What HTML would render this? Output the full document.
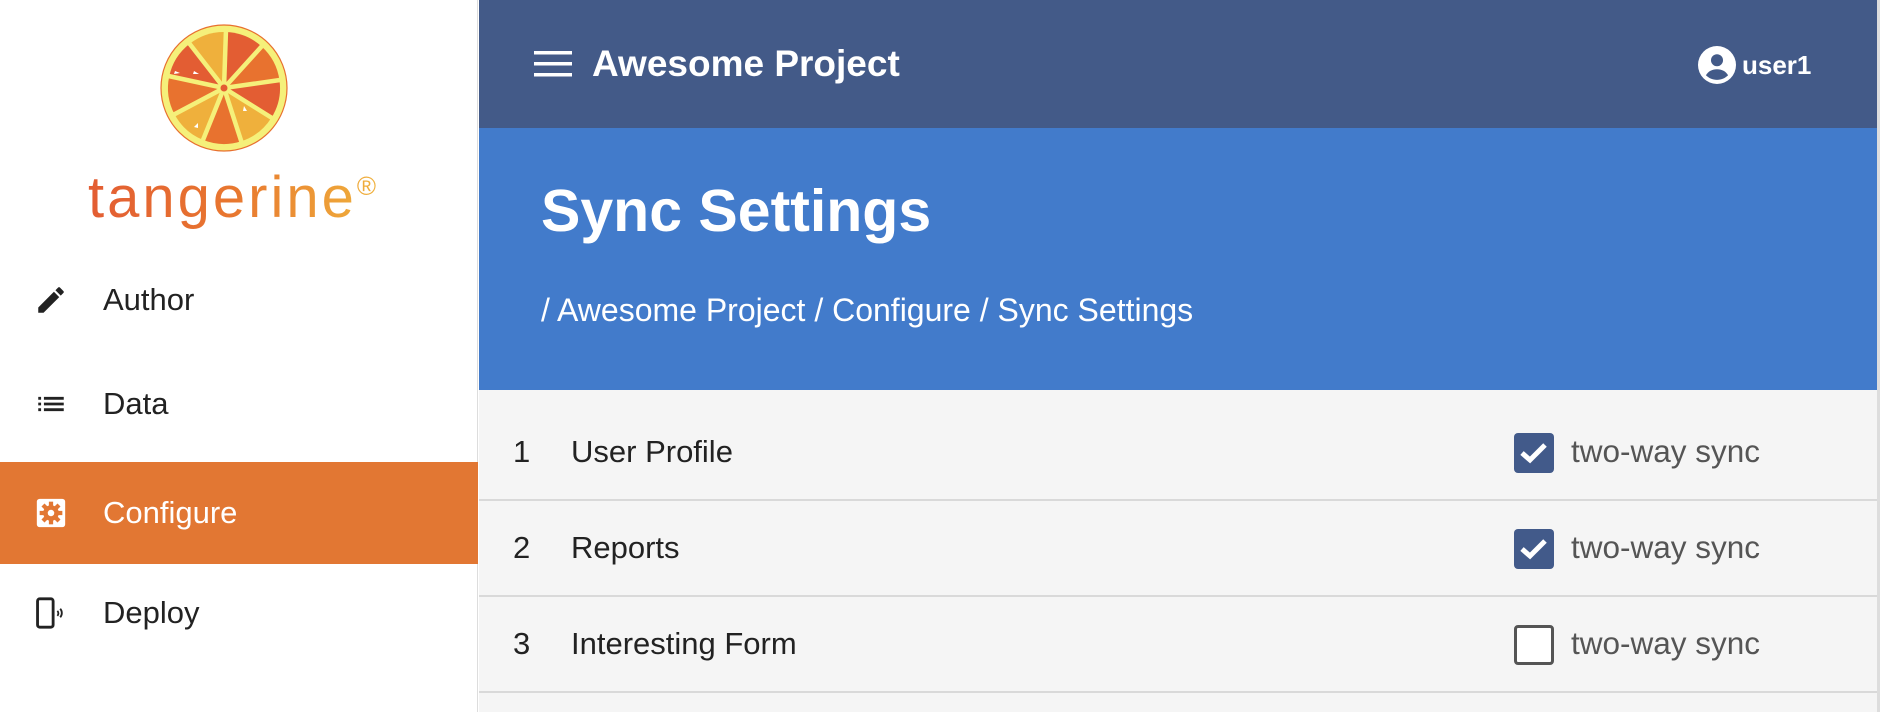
<!DOCTYPE html>
<html><head><meta charset="utf-8"><style>
*{margin:0;padding:0;box-sizing:border-box}
body{width:1880px;height:712px;overflow:hidden;background:#fff;font-family:"Liberation Sans",sans-serif;position:relative}
.side{position:absolute;left:0;top:0;width:478px;height:712px;background:#fff;border-right:1px solid #ddd}
.nav{position:absolute;left:0;width:478px;height:102px;display:flex;align-items:center;font-size:31px;color:#222}
.nav svg{position:absolute;left:34px}
.nav span{position:absolute;left:103px}
.top{position:absolute;left:479px;top:0;width:1398px;height:128px;background:#435a88;color:#fff}
.hero{position:absolute;left:479px;top:128px;width:1398px;height:262px;background:#427bcb;color:#fff}
.list{position:absolute;left:479px;top:390px;width:1398px;height:322px;background:#f5f5f5}
.row{position:absolute;left:0;width:1398px;height:96px;border-bottom:2px solid #d9d9d9;font-size:31px;color:#222}
.row .n{position:absolute;left:34px;top:29px}
.row .l{position:absolute;left:92px;top:29px}
.cb{position:absolute;left:1035px;top:28px;width:40px;height:40px;border-radius:4px}
.on{background:#425a8a}
.off{border:3px solid #555;background:#fff}
.row .t{position:absolute;left:1092px;top:28px;color:#555;font-size:31.5px}
.scroll{position:absolute;left:1877px;top:0;width:3px;height:712px;background:#ddd}
</style></head><body>
<div class="side">
<svg style="position:absolute;left:158px;top:22px" width="132" height="132" viewBox="-66 -66 132 132">
<circle r="63" fill="#f5f07a" stroke="#e8702f" stroke-width="1.2"/>
<g>
<path d="M0 0 L1.95 -55.97 A56 56 0 0 1 37.48 -41.61 Z" fill="#e35d33"/>
<path d="M0 0 L37.48 -41.61 A56 56 0 0 1 55.46 -7.79 Z" fill="#e8722f"/>
<path d="M0 0 L55.46 -7.79 A56 56 0 0 1 47.49 29.67 Z" fill="#e35d33"/>
<path d="M0 0 L47.49 29.67 A56 56 0 0 1 17.30 53.26 Z" fill="#efb03c"/>
<path d="M0 0 L17.30 53.26 A56 56 0 0 1 -20.98 51.92 Z" fill="#e8722f"/>
<path d="M0 0 L-20.98 51.92 A56 56 0 0 1 -49.45 26.29 Z" fill="#efb03c"/>
<path d="M0 0 L-49.45 26.29 A56 56 0 0 1 -54.78 -11.64 Z" fill="#e8722f"/>
<path d="M0 0 L-54.78 -11.64 A56 56 0 0 1 -34.48 -44.13 Z" fill="#e35d33"/>
<path d="M0 0 L-34.48 -44.13 A56 56 0 0 1 1.95 -55.97 Z" fill="#efb03c"/>
</g>
<g stroke="#f5f07a" stroke-width="4.5">
<line x1="0" y1="0" x2="1.95" y2="-57"/><line x1="0" y1="0" x2="38" y2="-42"/><line x1="0" y1="0" x2="56" y2="-8"/>
<line x1="0" y1="0" x2="48" y2="30"/><line x1="0" y1="0" x2="17.5" y2="54"/><line x1="0" y1="0" x2="-21" y2="52"/>
<line x1="0" y1="0" x2="-50" y2="26.5"/><line x1="0" y1="0" x2="-55.5" y2="-12"/><line x1="0" y1="0" x2="-35" y2="-45"/>
</g>
<circle r="3.5" fill="#e35d33"/>
<path d="M-49 -17 l5 2 -6 1z M-30 -17 l5 3 -6 0z M20 18 l3 5 -4 0z M-26 35 l-4 4 4 1z" fill="#fff"/>
</svg>
<div style="position:absolute;left:88px;top:154px;font-size:58px;letter-spacing:3px;background:linear-gradient(90deg,#e35d33,#e8772f 50%,#f0b23c);-webkit-background-clip:text;background-clip:text;color:transparent;line-height:64px">tangerine<sup style="font-size:26px;vertical-align:22px">®</sup></div>
<div class="nav" style="top:249px"><svg width="34" height="34" viewBox="0 0 24 24"><path fill="#222" d="M3 17.25V21h3.75L17.81 9.94l-3.75-3.75L3 17.25zM20.71 7.04a1 1 0 000-1.41l-2.34-2.34a1 1 0 00-1.41 0l-1.83 1.83 3.75 3.75 1.83-1.83z"/></svg><span>Author</span></div>
<div class="nav" style="top:353px"><svg width="34" height="34" viewBox="0 0 24 24"><path fill="#222" d="M3 13h2v-2H3v2zm0 4h2v-2H3v2zm0-8h2V7H3v2zm4 4h14v-2H7v2zm0 4h14v-2H7v2zM7 7v2h14V7H7z"/></svg><span>Data</span></div>
<div class="nav" style="top:462px;background:#e27733;color:#fff"><svg width="34" height="34" viewBox="0 0 24 24"><rect x="2" y="2" width="20" height="20" rx="2" fill="#fff"/><circle cx="12" cy="12" r="5.5" fill="#e27733"/><g fill="#e27733"><rect x="10.5" y="4" width="3" height="16"/><rect x="4" y="10.5" width="16" height="3"/><rect x="10.5" y="4" width="3" height="16" transform="rotate(45 12 12)"/><rect x="10.5" y="4" width="3" height="16" transform="rotate(-45 12 12)"/></g><circle cx="12" cy="12" r="2.3" fill="#fff"/></svg><span>Configure</span></div>
<div class="nav" style="top:562px"><svg width="34" height="34" viewBox="0 0 24 24"><rect x="2.5" y="2" width="11" height="20" rx="1.5" fill="none" stroke="#222" stroke-width="2"/><path d="M16.5 10.5a2.5 2.5 0 010 3.5M18.5 9a4.5 4.5 0 010 6" fill="none" stroke="#222" stroke-width="1.3"/></svg><span>Deploy</span></div>
</div>
<div class="top">
<svg style="position:absolute;left:55px;top:50px" width="38" height="28" viewBox="0 0 38 28"><rect y="1" width="38" height="3.5" fill="#fff"/><rect y="12" width="38" height="3.5" fill="#fff"/><rect y="23" width="38" height="3.5" fill="#fff"/></svg>
<div style="position:absolute;left:113px;top:43px;font-size:37px;font-weight:bold">Awesome Project</div>
<svg style="position:absolute;left:1219px;top:46px" width="38" height="38" viewBox="0 0 24 24"><circle cx="12" cy="12" r="12" fill="#fff"/><circle cx="12" cy="9" r="3.8" fill="#435a88"/><path d="M5 18.5c1.5-2.6 4-3.8 7-3.8s5.5 1.2 7 3.8c-1.8 1.8-4.2 2.9-7 2.9s-5.2-1.1-7-2.9z" fill="#435a88"/></svg>
<div style="position:absolute;left:1263px;top:50px;font-size:26px;font-weight:bold">user1</div>
</div>
<div class="hero">
<div style="position:absolute;left:62px;top:49px;font-size:59px;font-weight:bold">Sync Settings</div>
<div style="position:absolute;left:62px;top:164px;font-size:32px">/ Awesome Project / Configure / Sync Settings</div>
</div>
<div class="list">
<div class="row" style="top:15px"><span class="n">1</span><span class="l">User Profile</span><div class="cb on"><svg width="40" height="40" viewBox="0 0 40 40"><path d="M8 20l8 7 15-15" fill="none" stroke="#fff" stroke-width="5"/></svg></div><span class="t">two-way sync</span></div>
<div class="row" style="top:111px"><span class="n">2</span><span class="l">Reports</span><div class="cb on"><svg width="40" height="40" viewBox="0 0 40 40"><path d="M8 20l8 7 15-15" fill="none" stroke="#fff" stroke-width="5"/></svg></div><span class="t">two-way sync</span></div>
<div class="row" style="top:207px"><span class="n">3</span><span class="l">Interesting Form</span><div class="cb off"></div><span class="t">two-way sync</span></div>
</div>
<div class="scroll"></div>
</body></html>
